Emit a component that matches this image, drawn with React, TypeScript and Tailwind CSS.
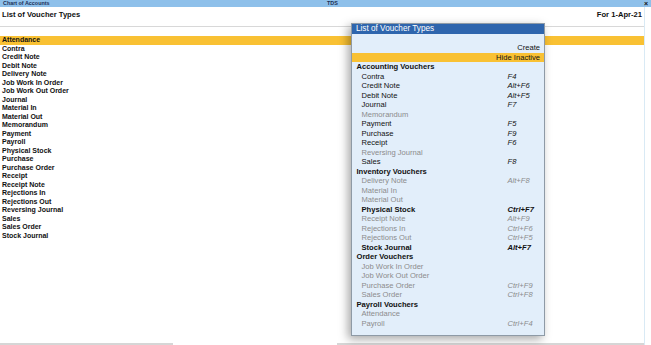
import React from 'react';

const VOUCHER_TYPES = [
  "Attendance", "Contra", "Credit Note", "Debit Note", "Delivery Note", "Job Work In Order",
  "Job Work Out Order", "Journal", "Material In", "Material Out", "Memorandum", "Payment",
  "Payroll", "Physical Stock", "Purchase", "Purchase Order", "Receipt", "Receipt Note",
  "Rejections In", "Rejections Out", "Reversing Journal", "Sales", "Sales Order", "Stock Journal"
];

type Item = { name: string; key?: string; active: boolean; bold?: boolean };
type Group = { title: string; items: Item[] };

const GROUPS: Group[] = [
  {
    title: "Accounting Vouchers",
    items: [
      { name: "Contra", key: "F4", active: true },
      { name: "Credit Note", key: "Alt+F6", active: true },
      { name: "Debit Note", key: "Alt+F5", active: true },
      { name: "Journal", key: "F7", active: true },
      { name: "Memorandum", active: false },
      { name: "Payment", key: "F5", active: true },
      { name: "Purchase", key: "F9", active: true },
      { name: "Receipt", key: "F6", active: true },
      { name: "Reversing Journal", active: false },
      { name: "Sales", key: "F8", active: true },
    ],
  },
  {
    title: "Inventory Vouchers",
    items: [
      { name: "Delivery Note", key: "Alt+F8", active: false },
      { name: "Material In", active: false },
      { name: "Material Out", active: false },
      { name: "Physical Stock", key: "Ctrl+F7", active: true, bold: true },
      { name: "Receipt Note", key: "Alt+F9", active: false },
      { name: "Rejections In", key: "Ctrl+F6", active: false },
      { name: "Rejections Out", key: "Ctrl+F5", active: false },
      { name: "Stock Journal", key: "Alt+F7", active: true, bold: true },
    ],
  },
  {
    title: "Order Vouchers",
    items: [
      { name: "Job Work In Order", active: false },
      { name: "Job Work Out Order", active: false },
      { name: "Purchase Order", key: "Ctrl+F9", active: false },
      { name: "Sales Order", key: "Ctrl+F8", active: false },
    ],
  },
  {
    title: "Payroll Vouchers",
    items: [
      { name: "Attendance", active: false },
      { name: "Payroll", key: "Ctrl+F4", active: false },
    ],
  },
];

export default function App() {
  return (
    <div
      className="relative w-[651px] h-[345px] overflow-hidden bg-white flex flex-col"
      style={{ fontFamily: '"Liberation Sans", Arial, sans-serif' }}
    >
      {/* window title bar */}
      <div className="h-[7px] bg-[#8ec0ea] flex items-center text-[5.4px] font-bold text-[#1b2f55] leading-none">
        <span className="w-[327px] pl-[3px]">Chart of Accounts</span>
        <span>TDS</span>
        <span className="flex-1" />
        <span className="pr-[3px] text-[7px] text-[#111]">×</span>
      </div>

      <div className="flex flex-1">
        <div className="w-[645px] border-r border-[#d9eaf5] flex flex-col">
          <div className="h-[16px] flex items-center justify-between px-[2px] text-[7.6px] font-bold text-[#111]">
            <span>List of Voucher Types</span>
            <span>For 1-Apr-21</span>
          </div>
          <div className="h-[2.5px]" />
          <div className="h-[1.5px] bg-[#d8d8d8]" />
          <div className="mt-[9px] flex flex-col">
            {VOUCHER_TYPES.map((v, i) => (
              <div
                key={v}
                className={`h-[8.52px] leading-[8.52px] pl-[2px] text-[7px] font-bold text-[#111] ${i === 0 ? 'bg-[#f9c133]' : ''}`}
              >
                {v}
              </div>
            ))}
          </div>
          <div className="flex-1" />
          <div className="flex h-[1.5px] mb-[0.5px]">
            <div className="w-[173px] bg-[#d6d6d6]" />
            <div className="w-[164px]" />
            <div className="flex-1 bg-[#d6d6d6]" />
          </div>
        </div>
        <div className="flex-1" />
      </div>

      {/* popup list */}
      <div className="absolute left-[351px] top-[23px] w-[194px] h-[313px] bg-[#e2eefa] border border-[#8e9aa6] shadow-[-3px_3px_9px_rgba(0,0,0,0.35)] flex flex-col">
        <div className="h-[9.5px] bg-[#2e65ad] text-white text-[8.2px] leading-[9.5px] pl-[4px]">
          List of Voucher Types
        </div>
        <div className="h-[9.5px]" />
        <div className="h-[9.5px] leading-[9.5px] text-right pr-[4px] text-[7.6px] text-[#111]">Create</div>
        <div className="h-[9.5px] leading-[9.5px] text-right pr-[4px] text-[7.6px] text-[#111] bg-[#f9c133]">Hide Inactive</div>
        {GROUPS.map((g) => (
          <div key={g.title} className="flex flex-col">
            <div className="h-[9.5px] leading-[9.5px] pl-[4.5px] text-[7.6px] font-bold text-[#111]">{g.title}</div>
            {g.items.map((it) => (
              <div
                key={it.name}
                className={`h-[9.5px] leading-[9.5px] flex text-[7.6px] ${it.active ? 'text-[#111]' : 'text-[#8c8c8c]'} ${it.bold ? 'font-semibold' : ''}`}
              >
                <span className="w-[155.5px] pl-[9.5px]">{it.name}</span>
                <span className="italic">{it.key}</span>
              </div>
            ))}
          </div>
        ))}
      </div>
    </div>
  );
}
